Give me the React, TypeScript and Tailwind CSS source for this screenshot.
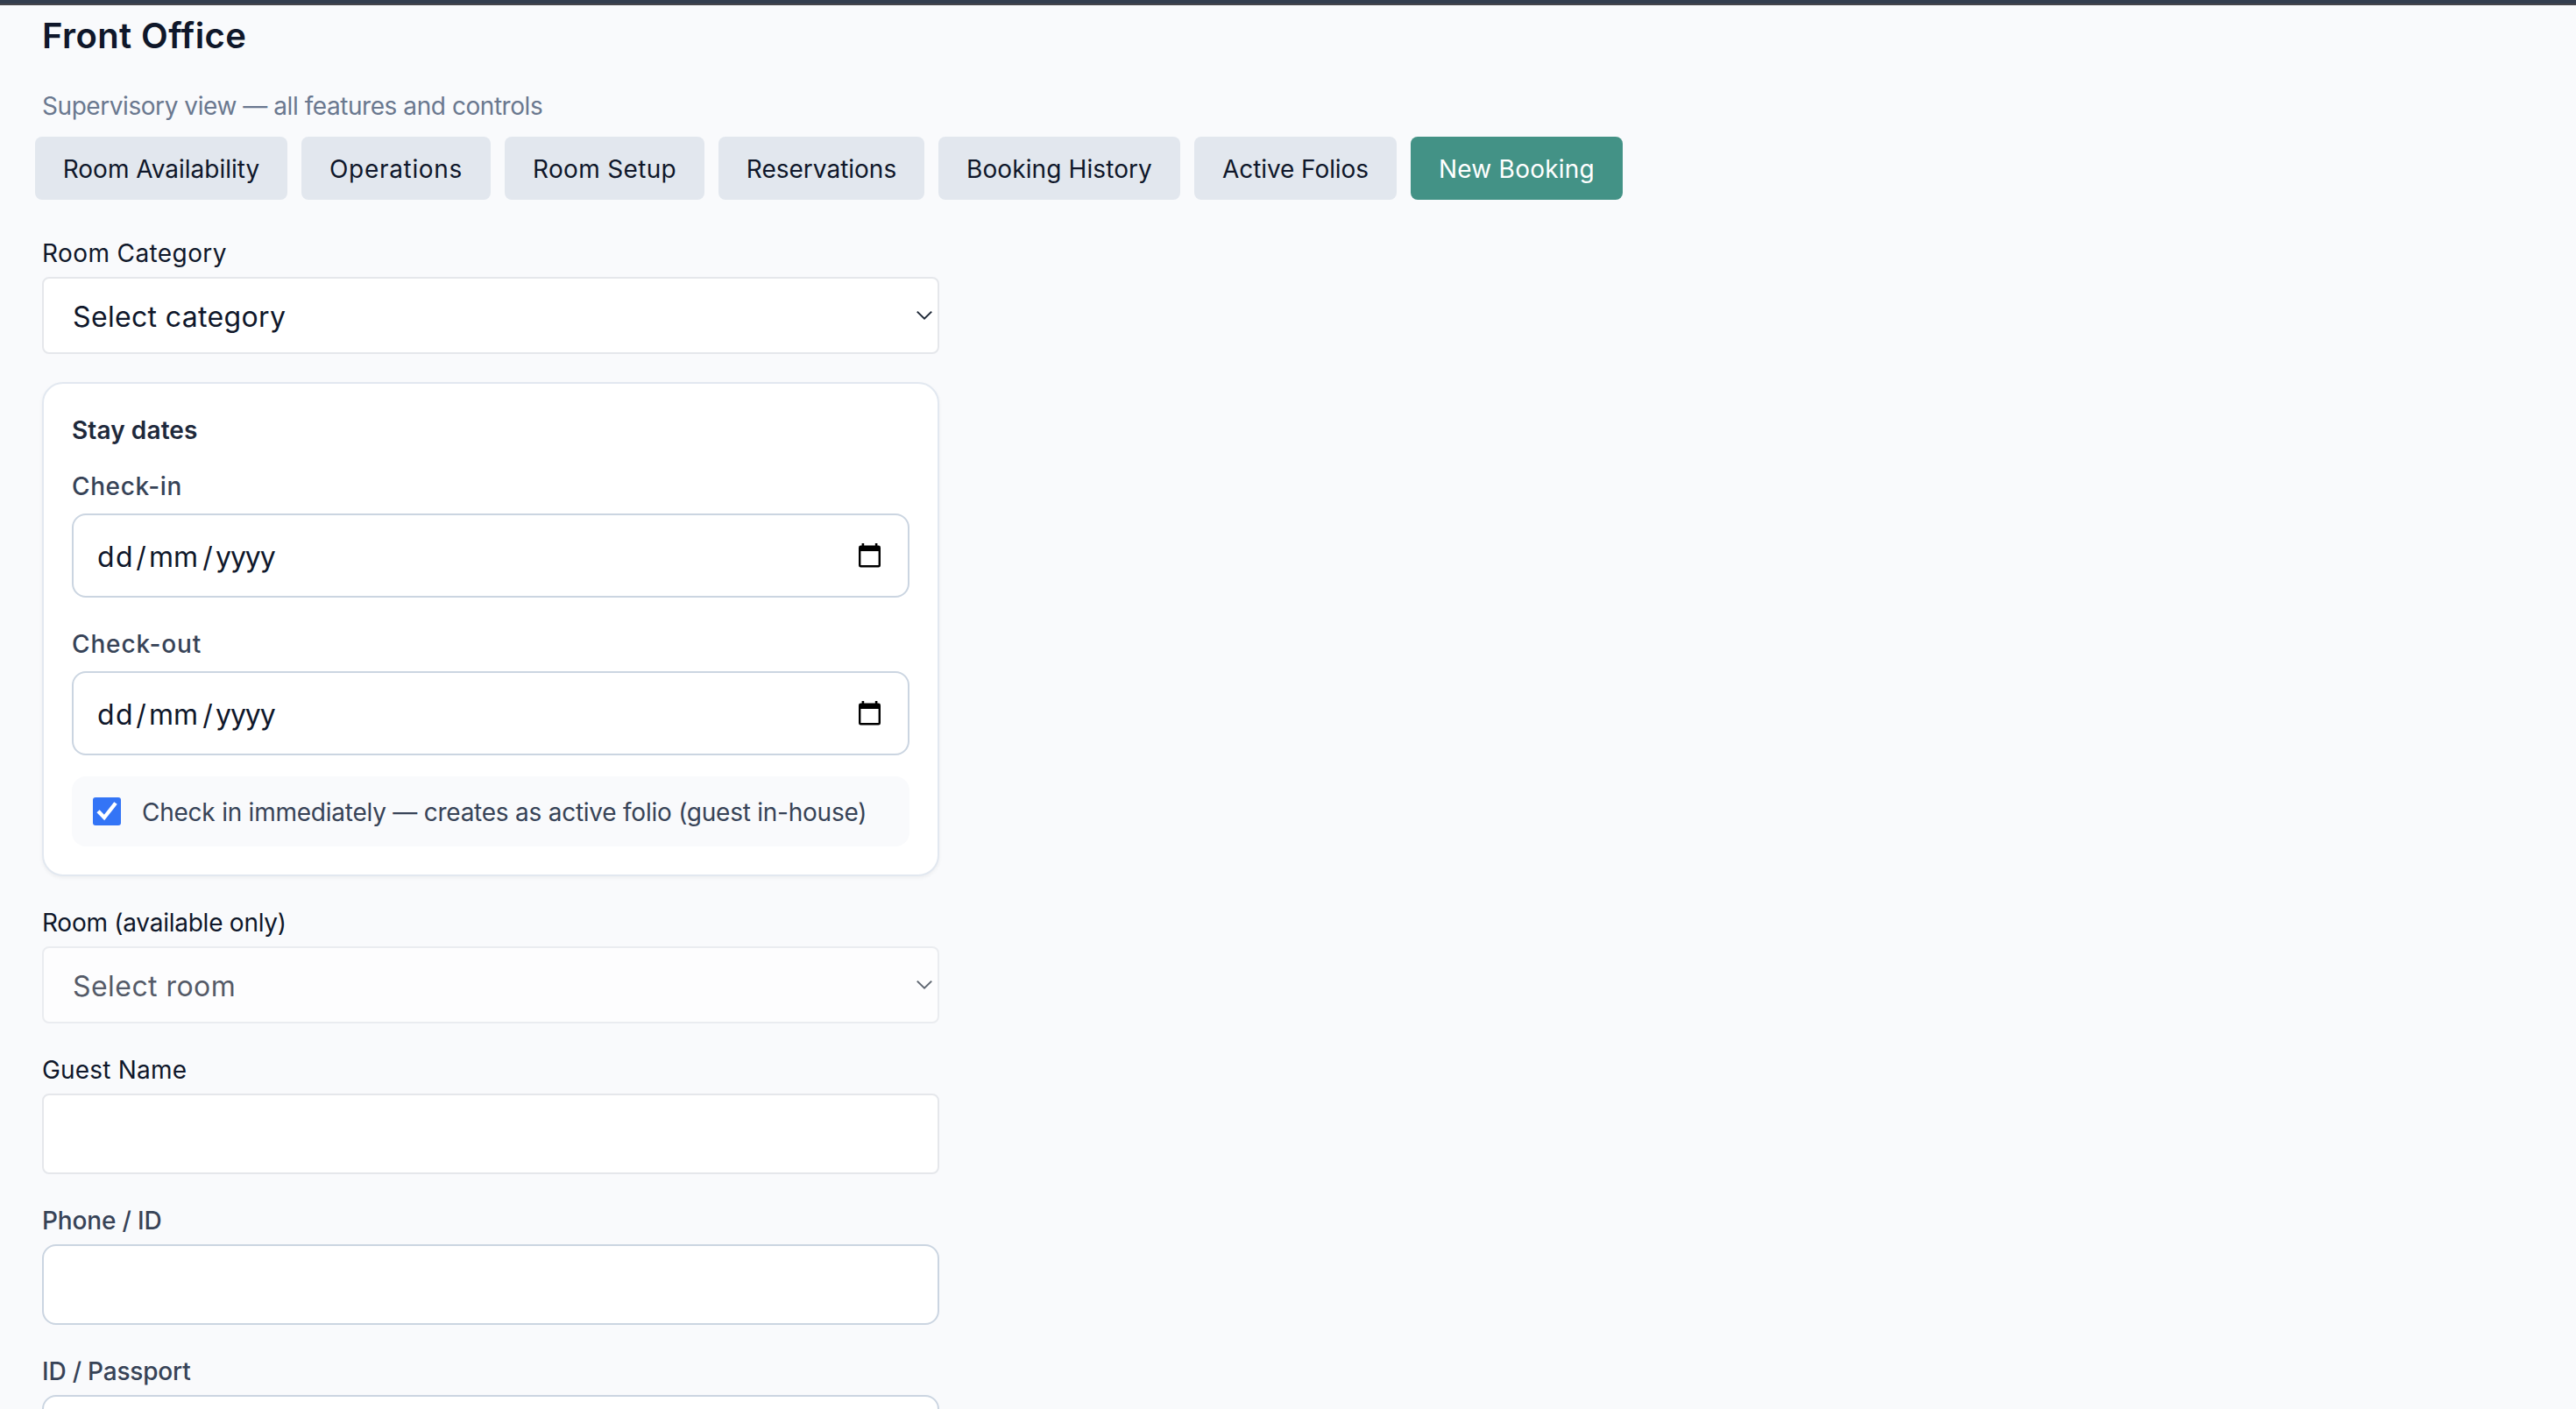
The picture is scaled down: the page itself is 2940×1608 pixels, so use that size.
import clsx from "clsx";
import type { ReactNode } from "react";

interface Tab {
  label: string;
  className: string;
  active?: boolean;
}

const tabs: Tab[] = [
  { label: "Room Availability", className: "w-[288px]" },
  { label: "Operations", className: "w-[216px] tracking-[0.68px]" },
  { label: "Room Setup", className: "w-[228px] tracking-[0.33px]" },
  { label: "Reservations", className: "w-[235px]" },
  { label: "Booking History", className: "w-[276px] tracking-[0.1px]" },
  { label: "Active Folios", className: "w-[231px] tracking-[-0.08px]" },
  { label: "New Booking", className: "w-[242px] tracking-[0.23px]", active: true },
];

const ChevronIcon = () => (
  <svg width="20" height="12" viewBox="0 0 20 12" fill="none" stroke="#1f2937" strokeWidth="2">
    <path d="M1.8 1.6 L10 9.6 L18.2 1.6" />
  </svg>
);

const CalendarIcon = () => (
  <svg width="25" height="28" viewBox="0 0 25 28" fill="none">
    <path
      fill="#000"
      fillRule="evenodd"
      d="M3.6 0h2.6v2.6h12.6V0h2.6v2.6h1.2a2.4 2.4 0 0 1 2.4 2.4v20.2a2.4 2.4 0 0 1-2.4 2.4H2.4A2.4 2.4 0 0 1 0 25.2V5a2.4 2.4 0 0 1 2.4-2.4h1.2zM2.4 9v16h20.2V9z"
    />
  </svg>
);

const Label = ({ children, className }: { children: ReactNode; className?: string }) => (
  <label className={clsx("block h-10 leading-[42px]", className)}>{children}</label>
);

interface SelectBoxProps {
  value: string;
  className?: string;
  disabled?: boolean;
}

const SelectBox = ({ value, className, disabled }: SelectBoxProps) => (
  <div
    className={clsx(
      "mt-2 flex h-[88px] items-center justify-between rounded-lg border-2 border-[#e5e7eb] bg-white pl-[33px] pr-[5px] text-[32px]",
      disabled && "opacity-70"
    )}
  >
    <span className={clsx("pt-[3px]", className)}>{value}</span>
    <ChevronIcon />
  </div>
);

const DateField = ({ label, className }: { label: string; className: string }) => (
  <div>
    <Label className={clsx("font-medium text-[#374357]", className)}>{label}</Label>
    <div className="mt-3 flex h-24 items-center justify-between rounded-2xl border-2 border-[#cbd5e1] bg-white pl-[27px] pr-[31px] text-[32px]">
      <div className="flex pt-[3px]">
        <span className="w-[42px] tracking-[1.4px]">dd</span>
        <span className="w-4 text-center">/</span>
        <span className="w-[60px] pl-px">mm</span>
        <span className="w-4 text-center">/</span>
        <span className="pl-px tracking-[-1.1px]">yyyy</span>
      </div>
      <CalendarIcon />
    </div>
  </div>
);

const App = () => {
  return (
    <div className="h-screen overflow-hidden whitespace-nowrap bg-[#f9fafc] font-['Inter',sans-serif] text-[28px] leading-10 text-[#0f172a]">
      <div className="h-1.5 border-b-2 border-[#45454b] bg-[#343e4f]" />

      <main className="px-12 pt-[7px]">
        <h1 className="text-[40px] font-semibold leading-[56px] tracking-[0.4px]">Front Office</h1>
        <p className="mt-[31px] h-10 leading-[42px] tracking-[-0.44px] text-[#6a788f]">
          Supervisory view — all features and controls
        </p>

        <div className="-ml-2 mt-4 flex gap-4">
          {tabs.map((tab) => (
            <button
              key={tab.label}
              className={clsx(
                "h-[72px] rounded-lg pt-0.5 text-center",
                tab.active ? "bg-[#439286] text-white" : "bg-[#e2e7ee]",
                tab.className
              )}
            >
              {tab.label}
            </button>
          ))}
        </div>

        <form className="mt-10 flex w-[1024px] flex-col gap-8">
          <div>
            <Label className="tracking-[0.4px]">Room Category</Label>
            <SelectBox value="Select category" className="tracking-[0.35px]" />
          </div>

          <section className="rounded-3xl border-2 border-[#e2e8f0] bg-white p-8 shadow-[0_2px_4px_rgba(0,0,0,0.05)]">
            <h2 className="h-10 font-semibold leading-[42px] tracking-[0.1px] text-[#1e293b]">Stay dates</h2>
            <div className="mt-6 flex flex-col gap-8">
              <DateField label="Check-in" className="tracking-[0.6px]" />
              <DateField label="Check-out" className="tracking-[0.85px]" />
            </div>
            <label className="mt-6 flex h-20 items-center gap-6 rounded-2xl bg-[#f9fafc] px-6 text-[#374357]">
              <svg width="32" height="32" viewBox="0 0 32 32">
                <rect width="32" height="32" rx="3" fill="#3374f6" />
                <path d="M6 15.8 L13 23 L26 6.5" fill="none" stroke="#fff" strokeWidth="4.4" />
              </svg>
              <span className="pt-px tracking-[-0.24px]">
                Check in immediately — creates as active folio (guest in-house)
              </span>
            </label>
          </section>

          <div>
            <Label className="tracking-[-0.25px]">Room (available only)</Label>
            <SelectBox value="Select room" className="tracking-[0.45px]" disabled />
          </div>

          <div>
            <Label className="tracking-[0.2px]">Guest Name</Label>
            <input className="mt-2 block h-[92px] w-full rounded-lg border-2 border-[#e5e7eb] bg-white px-8" />
          </div>

          <div>
            <Label className="font-medium tracking-[-0.15px] text-[#374357]">Phone / ID</Label>
            <input className="mt-2 block h-[92px] w-full rounded-2xl border-2 border-[#cbd5e1] bg-white px-6" />
          </div>

          <div>
            <Label className="font-medium tracking-[-0.2px] text-[#374357]">ID / Passport</Label>
            <input className="mt-2 block h-[92px] w-full rounded-2xl border-2 border-[#cbd5e1] bg-white px-6" />
          </div>
        </form>
      </main>
    </div>
  );
};

export default App;
